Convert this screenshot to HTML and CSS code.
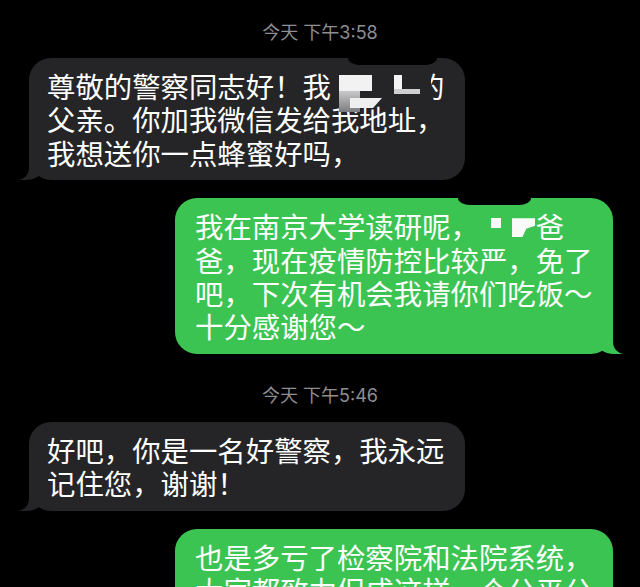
FILE: index.html
```html
<!DOCTYPE html>
<html lang="zh-CN">
<head>
<meta charset="utf-8">
<title>信息</title>
<link rel="stylesheet" href="styles.css">
</head>
<body>
<div class="chat">
  <div class="time">今天 下午3:58</div>
  <div class="bubble in">尊敬的警察同志好！我<span class="hid">某某某</span>的父亲。你加我微信发给我地址，我想送你一点蜂蜜好吗，<span class="notch notch-a"></span><span class="mask mask-a"></span><span class="blk a1"></span><span class="blk a2"></span><span class="blk a3"></span><span class="blk a4"></span><span class="blk a5"></span></div>
  <div class="bubble out">我在南京大学读研呢，<span class="hid">某某</span>爸爸，现在疫情防控比较严，免了吧，下次有机会我请你们吃饭～十分感谢您～<span class="notch notch-b"></span><span class="blk b1"></span><span class="blk b2"></span></div>
  <div class="time time-2">今天 下午5:46</div>
  <div class="bubble in">好吧，你是一名好警察，我永远记住您，谢谢！</div>
  <div class="bubble out">也是多亏了检察院和法院系统，大家都致力促成这样一个公平公正的社会环境。</div>
</div>
</body>
</html>
```

FILE: styles.css
```css
html, body {
  margin: 0;
  height: 100%;
  background: #000;
  overflow: hidden;
}

.chat {
  display: flex;
  flex-direction: column;
  padding-top: 22px;
  font-family: "Noto Sans CJK SC", sans-serif;
}

.time {
  font-family: Inter, "Noto Sans CJK SC", sans-serif;
  font-size: 18px;
  line-height: 22px;
  color: #8e8e93;
  text-align: center;
  margin-bottom: 14px;
}

.time-2 {
  margin-top: 31px;
  margin-bottom: 15px;
}

.bubble {
  position: relative;
  max-width: 400px;
  padding: 11px 18px;
  border-radius: 22px;
  font-size: 28.4px;
  line-height: 33.4px;
  color: #fff;
}

.bubble + .bubble {
  margin-top: 18px;
}

.in {
  align-self: flex-start;
  margin-left: 29px;
  background: #252527;
}

.out {
  align-self: flex-end;
  margin-right: 27px;
  padding-left: 20px;
  background: #3cc453;
}

/* tails */
.bubble::before,
.bubble::after {
  content: "";
  position: absolute;
  bottom: 0;
}

.in::before {
  left: -11px;
  width: 26px;
  height: 22px;
  background: #252527;
  border-bottom-right-radius: 18px 14px;
}

.in::after {
  left: -22px;
  width: 22px;
  height: 24px;
  background: #000;
  border-bottom-right-radius: 12px;
}

.out::before {
  right: -9px;
  width: 26px;
  height: 22px;
  background: #3cc453;
  border-bottom-left-radius: 18px 14px;
}

.out::after {
  right: -22px;
  width: 22px;
  height: 24px;
  background: #000;
  border-bottom-left-radius: 12px;
}

.hid {
  color: transparent;
}

/* black notch at top edge of bubbles */
.notch {
  position: absolute;
  top: 0;
  height: 7px;
  background: #000;
  border-radius: 0 0 12px 12px / 0 0 7px 7px;
}

.notch-a {
  left: 319px;
  width: 89px;
}

.notch-b {
  left: 283px;
  width: 73px;
}

/* redaction blocks */
.mask,
.blk {
  position: absolute;
}

.mask-a {
  left: 387px;
  top: 13px;
  width: 15px;
  height: 32px;
  background: #252527;
}

.a1 {
  left: 310px;
  top: 17px;
  width: 33px;
  height: 16px;
  background: #f2f2f2;
}

.a2 {
  left: 310px;
  top: 33px;
  width: 21px;
  height: 21px;
  background: linear-gradient(#c9c9cb, #7c7c80);
}

.a3 {
  left: 321px;
  top: 40px;
  width: 32px;
  height: 10px;
  background: #efefef;
  clip-path: polygon(0 0, 100% 0, 72% 100%, 0 100%);
}

.a4 {
  left: 365px;
  top: 17px;
  width: 8px;
  height: 19px;
  background: #f4f4f4;
}

.a5 {
  left: 365px;
  top: 31px;
  width: 26px;
  height: 5px;
  background: #cfcfd1;
}

.b1 {
  left: 316px;
  top: 20px;
  width: 10px;
  height: 10px;
  background: #fafafa;
}

.b2 {
  left: 337px;
  top: 20px;
  width: 23px;
  height: 19px;
  background: #fafafa;
  clip-path: polygon(0 0, 100% 0, 100% 40%, 62% 55%, 45% 100%, 0 100%);
}
```
